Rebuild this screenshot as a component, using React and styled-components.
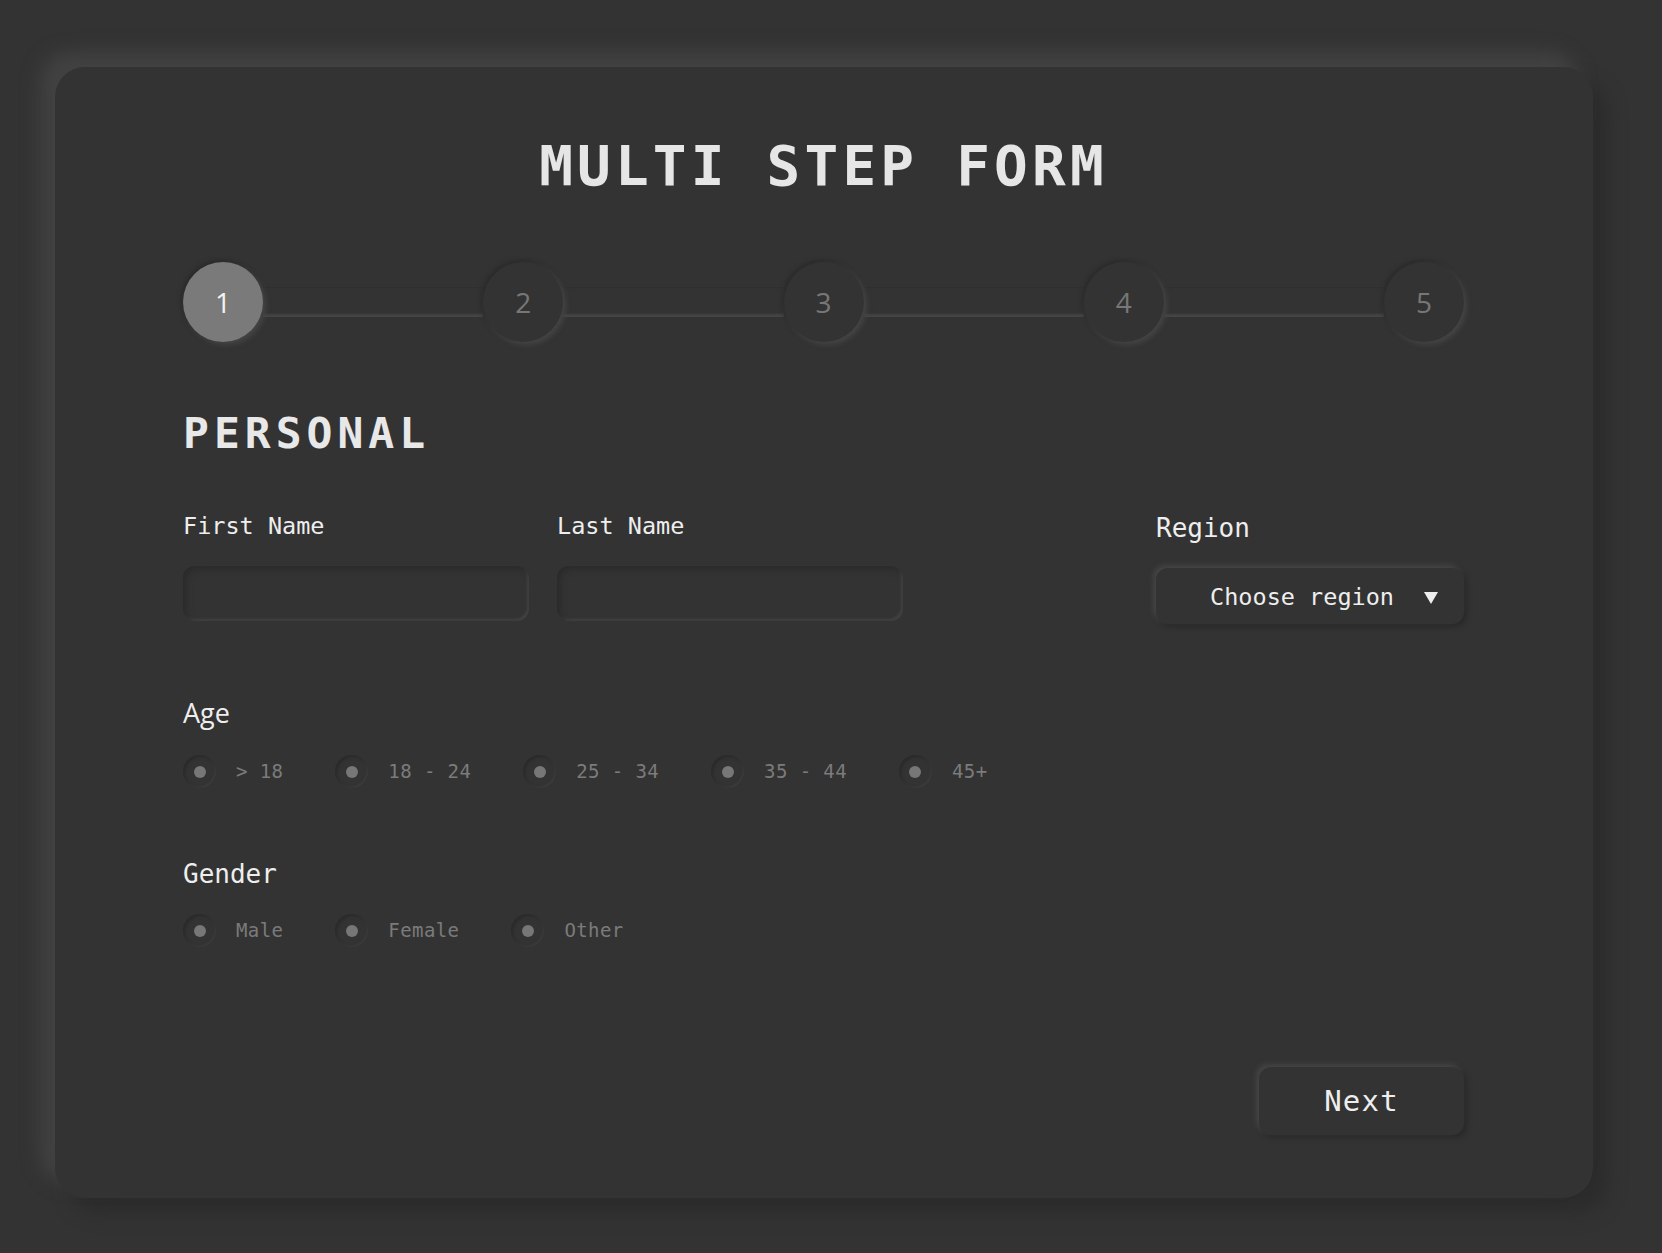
import React from "react";
import styled, { createGlobalStyle } from "styled-components";

const GlobalStyle = createGlobalStyle`
  html, body {
    margin: 0;
    padding: 0;
    background: #333333;
  }
  body {
    font-family: "DejaVu Sans Mono", monospace;
  }
`;

const Card = styled.div`
  margin: 67px 69px 55px 55px;
  padding: 71px 129px 63px 128px;
  background: #333333;
  border-radius: 30px;
  box-shadow: -15px -15px 18px #424242, 15px 15px 18px #2c2c2c;
  display: flex;
  flex-direction: column;
`;

const Title = styled.h1`
  margin: 0;
  font: bold 56px/1 "DejaVu Sans Mono", monospace;
  letter-spacing: 4.2px;
  color: #e6e6e6;
  text-align: center;
`;

const Steps = styled.div`
  display: flex;
  align-items: center;
  height: 80px;
  margin-top: 68px;
`;

const StepCircle = styled.div`
  flex: none;
  width: 80px;
  height: 80px;
  border-radius: 50%;
  display: flex;
  align-items: center;
  justify-content: center;
  font: 28px/1 "Open Sans", sans-serif;
  color: ${(p) => (p.$active ? "#f2f2f2" : "#777777")};
  background: ${(p) => (p.$active ? "#7a7a7a" : "#333333")};
  box-shadow: 3px 3px 5px #444444, -2px -2px 4px #2b2b2b;
  position: relative;
  z-index: 1;
`;

const Track = styled.div`
  flex: 1;
  height: 30px;
  box-shadow: inset 0 1px 1px #2f2f2f, inset 0 -3px 2px #454545;
`;

const SectionTitle = styled.h2`
  margin: 70px 0 0;
  font: bold 43px/1 "DejaVu Sans Mono", monospace;
  letter-spacing: 5px;
  color: #e8e8e8;
`;

const FieldsRow = styled.div`
  display: flex;
  align-items: flex-start;
  margin-top: 60px;
`;

const NameFields = styled.div`
  display: flex;
  gap: 28px;
`;

const Field = styled.div`
  display: flex;
  flex-direction: column;
  width: ${(p) => p.$width}px;
  margin-left: ${(p) => (p.$push ? "auto" : "0")};
`;

const Label = styled.label`
  font: ${(p) => p.$size || 23.5}px/1 "DejaVu Sans Mono", monospace;
  color: #eeeeee;
`;

const TextInput = styled.input`
  margin-top: 27px;
  height: 55px;
  width: 100%;
  box-sizing: border-box;
  border: none;
  outline: none;
  border-radius: 12px;
  background: #333333;
  padding: 0 16px;
  color: #eeeeee;
  font: 22px "DejaVu Sans Mono", monospace;
  box-shadow: inset 3px 3px 6px #2a2a2a, inset -2px -2px 3px #454545;
`;

const Select = styled.div`
  margin-top: 27px;
  height: 56px;
  box-sizing: border-box;
  border-radius: 12px;
  display: flex;
  align-items: center;
  justify-content: flex-end;
  gap: 30px;
  padding: 3px 26px 0 0;
  font: 23.5px/1 "DejaVu Sans Mono", monospace;
  color: #eeeeee;
  background: #333333;
  box-shadow: -3px -3px 5px #444444, 3px 3px 5px #2a2a2a;
`;

const GroupTitle = styled.div`
  margin-top: ${(p) => (p.$sans ? 75 : 73)}px;
  font: ${(p) =>
    p.$sans
      ? `27px/1 "Open Sans", "Noto Sans", sans-serif`
      : `26px/1 "DejaVu Sans Mono", monospace`};
  color: #eeeeee;
`;

const RadioRow = styled.div`
  display: flex;
  align-items: center;
  gap: 52px;
  margin-top: ${(p) => p.$mt}px;
`;

const RadioItem = styled.label`
  display: flex;
  align-items: center;
  gap: 20px;
  font: 19px/1 "DejaVu Sans Mono", monospace;
  letter-spacing: 0.4px;
  color: #7b7b7b;
`;

const RadioRing = styled.span`
  width: 33px;
  height: 33px;
  border-radius: 50%;
  display: flex;
  align-items: center;
  justify-content: center;
  box-shadow: inset 2px 2px 3px #2a2a2a, inset -1px -1px 2px #3e3e3e;
`;

const RadioDot = styled.span`
  width: 12px;
  height: 12px;
  border-radius: 50%;
  background: #777777;
`;

const Actions = styled.div`
  display: flex;
  justify-content: flex-end;
  margin-top: 120px;
`;

const NextButton = styled.button`
  width: 205px;
  height: 68px;
  border: none;
  border-radius: 12px;
  background: #333333;
  color: #eeeeee;
  font: 29px/1 "DejaVu Sans Mono", monospace;
  letter-spacing: 1.2px;
  box-shadow: -3px -3px 5px #444444, 3px 3px 5px #2a2a2a;
  cursor: pointer;
`;

const ArrowDown = () => (
  <svg width="14" height="12" viewBox="0 0 14 12">
    <polygon points="0,0 14,0 7,12" fill="#eeeeee" />
  </svg>
);

const Radio = ({ label }) => (
  <RadioItem>
    <RadioRing>
      <RadioDot />
    </RadioRing>
    {label}
  </RadioItem>
);

export default function App() {
  const steps = [1, 2, 3, 4, 5];
  return (
    <>
      <GlobalStyle />
      <Card>
        <Title>MULTI STEP FORM</Title>
        <Steps>
          {steps.map((n, i) => (
            <React.Fragment key={n}>
              {i > 0 && <Track />}
              <StepCircle $active={n === 1}>{n}</StepCircle>
            </React.Fragment>
          ))}
        </Steps>
        <SectionTitle>PERSONAL</SectionTitle>
        <FieldsRow>
          <NameFields>
            <Field $width={346}>
              <Label>First Name</Label>
              <TextInput type="text" />
            </Field>
            <Field $width={346}>
              <Label>Last Name</Label>
              <TextInput type="text" />
            </Field>
          </NameFields>
          <Field $width={308} $push>
            <Label $size={26}>Region</Label>
            <Select>
              <span>Choose region</span>
              <ArrowDown />
            </Select>
          </Field>
        </FieldsRow>
        <GroupTitle $sans>Age</GroupTitle>
        <RadioRow $mt={29}>
          {["> 18", "18 - 24", "25 - 34", "35 - 44", "45+"].map((a) => (
            <Radio key={a} label={a} />
          ))}
        </RadioRow>
        <GroupTitle>Gender</GroupTitle>
        <RadioRow $mt={27}>
          {["Male", "Female", "Other"].map((g) => (
            <Radio key={g} label={g} />
          ))}
        </RadioRow>
        <Actions>
          <NextButton>Next</NextButton>
        </Actions>
      </Card>
    </>
  );
}
